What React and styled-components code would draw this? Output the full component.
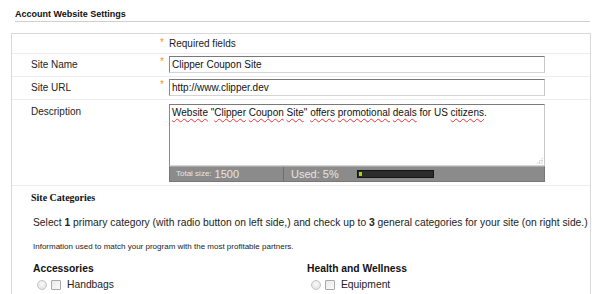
import React from "react";
import styled, { createGlobalStyle } from "styled-components";

const GlobalStyle = createGlobalStyle`
  body {
    margin: 0;
    background: #fff;
    font-family: "Liberation Sans", Arial, sans-serif;
    color: #222;
  }
`;

const Page = styled.div`
  width: 600px;
  height: 294px;
  box-sizing: border-box;
  padding: 8px 9px 0 11px;
  overflow: hidden;
`;

const Title = styled.h2`
  margin: 0 1px 0 4px;
  padding-bottom: 1px;
  font-size: 9px;
  line-height: 12px;
  font-weight: bold;
  color: #111;
  border-bottom: 1px solid #d0d0d0;
`;

const Box = styled.div`
  margin-top: 11px;
  border: 1px solid #d9d9d9;
  border-bottom: none;
`;

const Row = styled.div`
  display: grid;
  grid-template-columns: 148px 9px 376px 1fr;
  align-items: start;
  padding: ${(p) => p.pad || "2px 0 3px"};
  border-bottom: 1px solid #ececec;
  font-size: 10px;
  line-height: 17px;
`;

const Label = styled.div`
  padding-left: 19px;
  color: #222;
  line-height: ${(p) => p.lh || "17px"};
`;

const Star = styled.span`
  color: #f7941d;
  font-size: 10px;
  line-height: 12px;
`;

const Note = styled.div`
  line-height: 14px;
`;

const Input = styled.input`
  box-sizing: border-box;
  width: 376px;
  height: 17px;
  margin: 0;
  padding: 0 2px;
  font-family: "Liberation Sans", Arial, sans-serif;
  font-size: 10px;
  color: #111;
  background: #fff;
  border: 1px solid;
  border-color: #7a7a7a #c8c8c8 #d4d4d4 #8a8a8a;
  outline: none;
`;

const TextBox = styled.div`
  position: relative;
  box-sizing: border-box;
  width: 376px;
  height: 62px;
  padding: 1px 2px;
  font-size: 10px;
  line-height: 13px;
  color: #111;
  border: 1px solid;
  border-color: #7a7a7a #c8c8c8 #d4d4d4 #8a8a8a;
`;

const Typo = styled.span`
  text-decoration: underline wavy #e33;
  text-decoration-thickness: 1px;
  text-underline-offset: 2px;
`;

const Grip = styled.span`
  position: absolute;
  right: 1px;
  bottom: 1px;
  width: 7px;
  height: 7px;
  background: radial-gradient(circle, #aaa 0.6px, transparent 0.9px) 0 0 / 2.4px 2.4px;
  clip-path: polygon(100% 0, 100% 100%, 0 100%);
`;

const Counter = styled.div`
  display: flex;
  width: 376px;
  height: 16px;
  box-sizing: border-box;
  background: #8b8b8b;
  border: 1px solid #777;
  border-top-color: #a9a9a9;
  color: #e6e6e6;
  line-height: 14px;
`;

const CounterCell = styled.div`
  display: flex;
  align-items: center;
  gap: ${(p) => p.gap || "3px"};
  width: ${(p) => p.w || "auto"};
  padding-left: ${(p) => p.pl || "6px"};
  border-right: ${(p) => (p.divider ? "1px solid #6e6e6e" : "none")};
  box-sizing: border-box;
`;

const Small = styled.span`
  font-size: 8px;
`;

const Big = styled.span`
  font-size: 11px;
`;

const Meter = styled.div`
  width: 77px;
  height: 8px;
  box-sizing: border-box;
  background: #2c2c2c;
  border: 1px solid #141414;
  padding: 1px;
`;

const MeterFill = styled.div`
  height: 100%;
  background: #a6d20f;
`;

const Section = styled.div`
  padding: 6px 0 0 19px;
`;

const SectionHead = styled.h3`
  margin: 0;
  font-family: "Liberation Serif", "Times New Roman", serif;
  font-size: 10px;
  line-height: 12px;
  font-weight: bold;
  color: #111;
`;

const Lead = styled.p`
  margin: 13px 0 0 2px;
  font-size: 10.3px;
  line-height: 12px;
  color: #222;
`;

const Info = styled.p`
  margin: 13px 0 0 2px;
  font-size: 8px;
  line-height: 10px;
  color: #222;
`;

const Columns = styled.div`
  display: grid;
  grid-template-columns: 274px 1fr;
  margin: 11px 0 0 2px;
`;

const Group = styled.div`
  display: flex;
  flex-direction: column;
`;

const GroupTitle = styled.div`
  font-size: 10.3px;
  line-height: 12px;
  font-weight: bold;
  color: #111;
`;

const Option = styled.label`
  display: flex;
  align-items: center;
  height: 13px;
  margin-top: 3px;
  padding-left: 4px;
  font-size: 10.3px;
  color: #222;
`;

const Radio = styled.input.attrs({ type: "radio" })`
  appearance: none;
  width: 10px;
  height: 10px;
  margin: 0 4px 0 0;
  border: 1px solid #c4c4c4;
  border-radius: 50%;
  background: radial-gradient(circle at 50% 40%, #fafafa, #dcdcdc);
`;

const Check = styled.input.attrs({ type: "checkbox" })`
  appearance: none;
  width: 10px;
  height: 10px;
  margin: 0 6px 0 0;
  border: 1px solid #a8a8a8;
  border-radius: 1px;
  background: linear-gradient(135deg, #e9e9e9, #fbfbfb);
`;

const categories = [
  { name: "Accessories", items: ["Handbags", "Jewelry"] },
  { name: "Health and Wellness", items: ["Equipment", "Vitamins"] },
];

export default function App() {
  return (
    <Page>
      <GlobalStyle />
      <Title>Account Website Settings</Title>
      <Box>
        <Row pad="3px 0 2px">
          <div />
          <Star>*</Star>
          <Note>Required fields</Note>
        </Row>
        <Row>
          <Label>Site Name</Label>
          <Star>*</Star>
          <Input defaultValue="Clipper Coupon Site" />
        </Row>
        <Row>
          <Label>Site URL</Label>
          <Star>*</Star>
          <Input defaultValue="http://www.clipper.dev" />
        </Row>
        <Row pad="4px 0 3px">
          <Label lh="15px">Description</Label>
          <div />
          <div>
            <TextBox>
              <Typo>Website</Typo> "<Typo>Clipper</Typo> <Typo>Coupon</Typo>{" "}
              <Typo>Site</Typo>" <Typo>offers</Typo> <Typo>promotional</Typo>{" "}
              <Typo>deals</Typo> for US <Typo>citizens</Typo>.
              <Grip />
            </TextBox>
            <Counter>
              <CounterCell w="114px" divider>
                <Small>Total size:</Small>
                <Big>1500</Big>
              </CounterCell>
              <CounterCell pl="7px" gap="18px">
                <Big>Used: 5%</Big>
                <Meter>
                  <MeterFill style={{ width: "5%" }} />
                </Meter>
              </CounterCell>
            </Counter>
          </div>
        </Row>
        <Section>
          <SectionHead>Site Categories</SectionHead>
          <Lead>
            Select <b>1</b> primary category (with radio button on left side,) and check up to{" "}
            <b>3</b> general categories for your site (on right side.)
          </Lead>
          <Info>Information used to match your program with the most profitable partners.</Info>
          <Columns>
            {categories.map((c) => (
              <Group key={c.name}>
                <GroupTitle>{c.name}</GroupTitle>
                {c.items.map((it) => (
                  <Option key={it}>
                    <Radio name="primary" />
                    <Check />
                    {it}
                  </Option>
                ))}
              </Group>
            ))}
          </Columns>
        </Section>
      </Box>
    </Page>
  );
}
